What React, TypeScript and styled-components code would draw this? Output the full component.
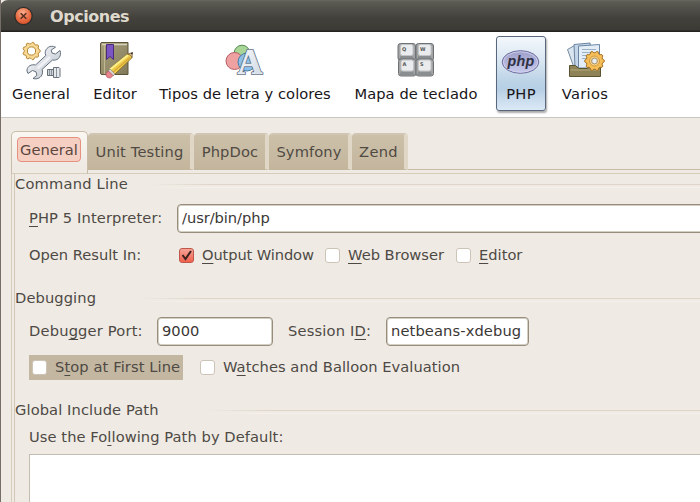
import React from "react";
import styled, { createGlobalStyle } from "styled-components";

const Global = createGlobalStyle`
  * { box-sizing: border-box; }
  html, body { margin: 0; padding: 0; overflow: hidden; background: #efebe4; }
  body { font-family: "DejaVu Sans", Verdana, sans-serif; font-size: 14.67px; line-height: 18px; color: #4e4944; }
`;

const Window = styled.div`
  width: 700px;
  height: 502px;
  display: flex;
  flex-direction: column;
  overflow: hidden;
  background: #efebe4;
  border-left: 1px solid #766e66;
  white-space: nowrap;
`;

const TitleBar = styled.header`
  height: 32px;
  flex: none;
  margin-left: -1px;
  padding-left: 14px;
  display: flex;
  align-items: center;
  gap: 16px;
  border-top-left-radius: 8px;
  background: linear-gradient(#696860 0, #5b5a53 2px, #42413b 18px, #3b3a35 30px, #242320 31px);
`;

const Title = styled.h1`
  margin: 0;
  font-size: 16px;
  line-height: 20px;
  font-weight: bold;
  color: #dfd9cd;
  letter-spacing: -0.45px;
  padding-top: 1px;
`;

const Toolbar = styled.nav`
  height: 86px;
  flex: none;
  display: flex;
  align-items: flex-start;
  padding-top: 4px;
  background: #fff;
  border-bottom: 1px solid #c9c5c0;
`;

const Tool = styled.button<{ $w: number; $active?: boolean; $ml?: number; $ls?: number }>`
  flex: none;
  width: ${(p) => p.$w}px;
  height: 75px;
  margin: 0 0 0 ${(p) => p.$ml ?? 0}px;
  padding: 4px 0 0;
  display: flex;
  flex-direction: column;
  align-items: center;
  gap: 4px;
  border: 1px solid ${(p) => (p.$active ? "#59677d" : "transparent")};
  border-radius: 3px;
  background: ${(p) =>
    p.$active ? "linear-gradient(#f3f7fb 0, #d7e5f1 35%, #bcd3e7 60%, #b7cfe4 72%, #dce9f6 100%)" : "none"};
  box-shadow: ${(p) => (p.$active ? "1px 2px 2px #aaa" : "none")};
  font: 14.67px/18px "DejaVu Sans", sans-serif;
  letter-spacing: ${(p) => p.$ls ?? 0}px;
  color: #191519;
  svg { flex: none; display: block; }
`;

const Tabs = styled.div`
  height: 56px;
  flex: none;
  padding: 13px 0 0 10px;
  display: flex;
  align-items: flex-end;
`;

const TabRule = styled.div`
  flex: 1;
  height: 5px;
  border-top: 1px solid #c7bba6;
  border-bottom: 1px solid #d6ccbc;
`;

const Tab = styled.button<{ $w: number; $ls?: number }>`
  width: ${(p) => p.$w}px;
  height: 41px;
  flex: none;
  margin: 0;
  padding: 0;
  display: flex;
  align-items: flex-start;
  border: 0;
  border-bottom: 1px solid #d6ccbc;
  background: none;
  font: inherit;
  color: #504a43;
  letter-spacing: ${(p) => p.$ls ?? 0}px;
  span {
    flex: 1;
    height: 37px;
    padding: 9px 0 0 1px;
    border-top: 2px solid #d1c6b4;
    border-right: 4px solid #e0d7c7;
    border-bottom: 1px solid #c2b59c;
    border-radius: 4px 4px 0 0;
    background: linear-gradient(#ccc0a9, #c4b69d);
    line-height: 16px;
  }
`;

const ActiveTab = styled.button`
  width: 77px;
  height: 43px;
  flex: none;
  padding: 5px 0 0 5px;
  margin: 0;
  display: flex;
  align-items: flex-start;
  border: 1px solid #c9bda9;
  border-bottom-color: #d6ccbc;
  border-radius: 5px 5px 0 0;
  background: linear-gradient(#faf7f2, #efebe4 80%);
  font: inherit;
  color: #5a463e;
  span {
    width: 64px;
    height: 25px;
    border: 1px solid #e69080;
    border-radius: 4px;
    background: #f6cfc3;
    line-height: 23px;
    text-align: center;
  }
`;

const Panel = styled.main`
  flex: 1;
  margin-left: 10px;
  padding-left: 2px;
  border-left: 1px solid #d6ccbc;
`;

const PanelInner = styled.div`
  height: 100%;
  border-left: 1px solid #d2c8b7;
`;

const Heading = styled.div<{ $mt: number; $gap: number; $ls?: number }>`
  height: 20px;
  margin-top: ${(p) => p.$mt}px;
  display: flex;
  align-items: center;
  gap: ${(p) => p.$gap}px;
  letter-spacing: ${(p) => p.$ls ?? 0}px;
  &::after {
    content: "";
    flex: 1;
    height: 2px;
    margin-top: 4px;
    border-top: 1px solid #dfd6c9;
    border-bottom: 1px solid #f5f1ea;
    mask-image: linear-gradient(90deg, transparent, #000 60px);
  }
`;

const Row = styled.div<{ $mt: number; $h: number }>`
  height: ${(p) => p.$h}px;
  margin-top: ${(p) => p.$mt}px;
  padding-left: 14px;
  display: flex;
  align-items: center;
`;

const Label = styled.span<{ $w?: number; $ls?: number; $ml?: number }>`
  flex: none;
  width: ${(p) => (p.$w ? `${p.$w}px` : "auto")};
  margin-left: ${(p) => p.$ml ?? 0}px;
  padding-bottom: 2px;
  letter-spacing: ${(p) => p.$ls ?? 0}px;
`;

const Key = styled.u`
  text-decoration: underline;
  text-decoration-thickness: 1px;
  text-underline-offset: 3px;
  text-decoration-skip-ink: none;
`;

const Field = styled.input<{ $w: number; $ls?: number }>`
  flex: none;
  width: ${(p) => p.$w}px;
  height: 29px;
  padding: 0 4px 2px;
  border: 1px solid #978d7d;
  box-shadow: inset 0 0 0 1px #d5cec2;
  border-radius: 4px;
  background: #fff;
  font: inherit;
  color: #3b3836;
  letter-spacing: ${(p) => p.$ls ?? 0}px;
  outline: 0;
`;

const Check = styled.label<{ $w: number; $ls?: number; $focus?: boolean; $ml?: number }>`
  flex: none;
  width: ${(p) => p.$w}px;
  height: 25px;
  margin-left: ${(p) => p.$ml ?? 0}px;
  display: flex;
  align-items: center;
  gap: 8px;
  padding-left: ${(p) => (p.$focus ? 3 : 0)}px;
  background: ${(p) => (p.$focus ? "#c4b7a1" : "none")};
  letter-spacing: ${(p) => p.$ls ?? 0}px;
  span { padding-bottom: 2px; }
`;

const Box = styled.i<{ $on?: boolean }>`
  flex: none;
  width: 15px;
  height: 15px;
  margin-bottom: 1px;
  border: 1px solid ${(p) => (p.$on ? "#c0584a" : "#cdc4b8")};
  border-radius: 3px;
  background: ${(p) => (p.$on ? "linear-gradient(#f8a396, #f0604e)" : "#fff")};
  svg { display: block; }
`;

const List = styled.div`
  height: 60px;
  margin: 7px 0 0 14px;
  border: 1px solid #c3bcb1;
  border-right: 0;
  background: #fff;
`;

const gear = (cx: number, cy: number, r: number, teeth: number) =>
  Array.from({ length: teeth * 4 }, (_, i) => {
    const a = ((i - 0.5) * Math.PI) / (teeth * 2);
    const d = i % 4 < 2 ? r : r * 0.84;
    return `${i ? "L" : "M"}${(cx + d * Math.cos(a)).toFixed(2)} ${(cy + d * Math.sin(a)).toFixed(2)}`;
  }).join("") + "Z";

const CloseIcon = () => (
  <svg width="20" height="20" viewBox="0 0 20 20">
    <defs>
      <radialGradient id="close" cx=".45" cy=".3" r=".7">
        <stop stopColor="#f9b08f" /><stop offset=".6" stopColor="#ea7048" /><stop offset="1" stopColor="#d9542c" />
      </radialGradient>
    </defs>
    <circle cx="9.5" cy="10" r="9.3" fill="#302f2b" />
    <circle cx="9.5" cy="10" r="8" fill="url(#close)" />
    <path d="M6.7 7.2l5.6 5.6m0-5.6l-5.6 5.6" stroke="#5c2e20" strokeWidth="1.6" />
  </svg>
);

const GeneralIcon = () => (
  <svg width="40" height="40" viewBox="0 0 40 40">
    <defs>
      <linearGradient id="steel" x2="1" y2="1"><stop stopColor="#fff" /><stop offset="1" stopColor="#b6bec9" /></linearGradient>
    </defs>
    <path d={gear(10.5, 10, 8.7, 9)} fill="#f8d994" stroke="#b58638" strokeLinejoin="round" />
    <circle cx="10.5" cy="10" r="4.1" fill="#fff" stroke="#b58638" />
    <path d="M34.5 6.2C29.5 3.5 24 7 24.200 12.500l.6 2L14.500 24c-4-1-8 1-8.500 5 0 1.500.3 2.500 1 3.500l4.500-3 3.500 1.300.8 3.500L12 37.500c5.500 1.500 10-2 9.500-7.500l-.5-1.500L31.500 19c4.500 1 8.500-2.500 8-7.500l-.5-2-4.500 3.500-3.500-1-.8-3z" fill="url(#steel)" stroke="#66717f" strokeLinejoin="round" />
    <path d="M16.5 27.500L29 16" stroke="#eef1f5" strokeWidth="2.5" />
    <path d="M26.5 28.500h6v6h-6z" fill="#cfd4d9" stroke="#68717a" />
    <path d="M32.5 26.500h5.500l1 1v8l-1 1h-5.500z" fill="#e5e9ec" stroke="#68717a" />
    <path d="M28.5 29v5m2-5v5M35.500 27v9" stroke="#8b949c" />
  </svg>
);

const EditorIcon = () => (
  <svg width="40" height="40" viewBox="0 0 40 40">
    <defs>
      <linearGradient id="book" x2="1" y2="1"><stop stopColor="#aaa17d" /><stop offset="1" stopColor="#817a59" /></linearGradient>
    </defs>
    <g transform="translate(1 0)">
      <path d="M6 1.5h26v32H6q-1.5 0-1.500-1.500V3Q4.500 1.500 6 1.500z" fill="url(#book)" stroke="#5d5539" />
      <path d="M6 3.500h25" stroke="#d6d3ba" strokeWidth="1.5" />
      <path d="M8.500 4v29" stroke="#c0b892" />
      <path d="M10.500 3.500h7v15l-3.500-3-3.500 3z" fill="#7b55c2" stroke="#4c2a7a" />
      <path d="M13 28.500L31.500 13q2.500-1 4 1.500l.5 2.200L18 34l-4-1z" fill="#edcd4b" stroke="#8a6921" strokeWidth=".9" />
      <path d="M14 28.500L32 14" stroke="#fff08a" strokeWidth="2" />
      <path d="M16 32L34 16.500" stroke="#d9a636" strokeWidth="1.3" />
      <path d="M31.500 13l5-1.500-.5 5q-1-3-4.500-3.500z" fill="#e5c59b" stroke="#765c35" strokeWidth=".7" />
      <path d="M34.500 12.200l2.400-1-.8 2.500z" fill="#222" />
      <path d="M14 28l5 5-2 2-5-5z" fill="#d5d7d5" stroke="#837d78" strokeWidth=".6" />
      <path d="M12.500 30l4.500 4.500-2.500 2.500q-5 0-4.500-4.500z" fill="#e8858d" stroke="#b75962" strokeWidth=".8" />
    </g>
  </svg>
);

const FontsIcon = () => (
  <svg width="40" height="40" viewBox="0 0 40 40">
    <defs>
      <linearGradient id="letter" x2="1" y2="1"><stop stopColor="#fff" /><stop offset="1" stopColor="#ccd6e2" /></linearGradient>
    </defs>
    <g transform="translate(-.5 1)">
      <circle cx="17.5" cy="11" r="7.8" fill="#a9d696" stroke="#548c55" />
      <circle cx="10" cy="19" r="8.5" fill="#efa0a0" stroke="#b45e65" />
      <circle cx="22.500" cy="20" r="9" fill="#8cc0ea" stroke="#477ba2" />
      <text x="13" y="31.500" textLength="25" lengthAdjust="spacingAndGlyphs" fontFamily="Liberation Serif" fontWeight="bold" fontSize="36" fill="none" stroke="#526275" strokeWidth="2.2" strokeLinejoin="round">A</text>
      <text x="13" y="31.500" textLength="25" lengthAdjust="spacingAndGlyphs" fontFamily="Liberation Serif" fontWeight="bold" fontSize="36" fill="url(#letter)" stroke="#edf1f6" strokeWidth=".6">A</text>
    </g>
  </svg>
);

const keys = [["Q", 1.5, 2], ["W", 19.5, 2], ["A", 2, 17.5], ["S", 19.5, 17.5]] as const;
const KeysIcon = () => (
  <svg width="40" height="40" viewBox="0 0 40 40">
    {keys.map(([k, x, y]) => (
      <g key={k} transform={`translate(${x} ${y})`}>
        <rect x=".5" y=".5" width="17.5" height="17" rx="2.5" fill="#a2a4a6" stroke="#6f7275" />
        <path d="M3 13l-2 4h16l-2-4z" fill="#8b8e91" />
        <rect x="3" y="1.500" width="12.500" height="11" rx="2" fill="#e9ebec" stroke="#c2c5c7" />
        <text x="4.500" y="7.500" fontFamily="DejaVu Sans" fontSize="5" fontWeight="bold" fill="#555">{k}</text>
      </g>
    ))}
  </svg>
);

const PhpIcon = () => (
  <svg width="40" height="40" viewBox="0 0 40 40">
    <defs>
      <linearGradient id="php" x2="0" y2="1"><stop stopColor="#9d9fc9" /><stop offset="1" stopColor="#c6c8ec" /></linearGradient>
    </defs>
    <ellipse cx="19.500" cy="21" rx="18.300" ry="11.300" fill="url(#php)" stroke="#6a6a9a" />
    <ellipse cx="19.500" cy="21" rx="17.200" ry="10.200" fill="none" stroke="#d5d5f0" strokeWidth=".8" />
    <text x="20" y="24.500" textAnchor="middle" textLength="27" lengthAdjust="spacingAndGlyphs" fontFamily="Liberation Sans" fontSize="15" fontWeight="bold" fontStyle="italic" fill="#303044">php</text>
  </svg>
);

const MiscIcon = () => (
  <svg width="40" height="40" viewBox="0 0 40 40">
    <path d="M2.500 8.500l7-4 4 22H9z" fill="#d9e5ef" stroke="#7489a0" />
    <path d="M9 3.500l16-1.500L28 26H10z" fill="#c4d6e8" stroke="#6b86a3" />
    <path d="M13.500 5l21-1.500V27h-21z" fill="#e2edf7" stroke="#6b86a3" />
    <path d="M17 8.500h14M17 11.500h12M17 14.500h10M17 17.500h9" stroke="#9db1c4" />
    <path d="M4.500 24.500h6l3 3h9l2-3h11v11h-31z" fill="#8e8357" stroke="#5b5230" />
    <path d="M5.500 29h29" stroke="#b3aa7d" />
    <path d={gear(29.5, 20, 9.8, 10)} fill="#f6bf58" stroke="#a56f24" strokeLinejoin="round" />
    <circle cx="29.500" cy="20" r="5" fill="#f8d486" stroke="#d09740" />
    <circle cx="29.500" cy="20" r="2.900" fill="#e8edf2" stroke="#8f7950" strokeWidth=".8" />
  </svg>
);

const Tick = () => (
  <svg width="13" height="13" viewBox="0 0 13 13">
    <path d="M2.500 6L5.500 10L11 2" fill="none" stroke="#3a211e" strokeWidth="2" />
  </svg>
);

export default function App() {
  return (
    <>
      <Global />
      <Window>
        <TitleBar><CloseIcon /><Title>Opciones</Title></TitleBar>
        <Toolbar>
          <Tool $w={60} $ml={10}><GeneralIcon />General</Tool>
          <Tool $w={60} $ml={14}><EditorIcon />Editor</Tool>
          <Tool $w={180} $ml={10} $ls={0.05}><FontsIcon />Tipos de letra y colores</Tool>
          <Tool $w={130} $ml={16} $ls={0.1}><KeysIcon />Mapa de teclado</Tool>
          <Tool $w={50} $ml={15} $ls={0.3} $active><PhpIcon />PHP</Tool>
          <Tool $w={60} $ml={9} $ls={0.3}><MiscIcon />Varios</Tool>
        </Toolbar>
        <Tabs>
          <ActiveTab><span>General</span></ActiveTab>
          <Tab $w={106} $ls={0.15}><span>Unit Testing</span></Tab>
          <Tab $w={75} $ls={0.15}><span>PhpDoc</span></Tab>
          <Tab $w={83} $ls={0.1}><span>Symfony</span></Tab>
          <Tab $w={56} $ls={0.3}><span>Zend</span></Tab>
          <TabRule />
        </Tabs>
        <Panel><PanelInner>
          <Heading $mt={0} $gap={20} $ls={0.2}>Command Line</Heading>
          <Row $mt={10} $h={29}>
            <Label $w={148} $ls={0.12}><Key>P</Key>HP 5 Interpreter:</Label>
            <Field $w={540} $ls={-0.05} defaultValue="/usr/bin/php" />
          </Row>
          <Row $mt={10} $h={25}>
            <Label $w={150}>Open Result In:</Label>
            <Check $w={146} $ls={-0.12}><Box $on><Tick /></Box><span><Key>O</Key>utput Window</span></Check>
            <Check $w={131}><Box /><span><Key>W</Key>eb Browser</span></Check>
            <Check $w={80}><Box /><span><Key>E</Key>ditor</span></Check>
          </Row>
          <Heading $mt={20} $gap={42} $ls={0.1}>Debugging</Heading>
          <Row $mt={9} $h={29}>
            <Label $w={128} $ls={0.18}>Debu<Key>g</Key>ger Port:</Label>
            <Field $w={116} defaultValue="9000" />
            <Label $w={98} $ml={15} $ls={0.18}>Session I<Key>D</Key>:</Label>
            <Field $w={143} $ls={0.12} defaultValue="netbeans-xdebug" />
          </Row>
          <Row $mt={9} $h={25}>
            <Check $w={154} $ls={0.1} $focus><Box /><span>S<Key>t</Key>op at First Line</span></Check>
            <Check $w={280} $ls={0.05} $ml={17}><Box /><span>W<Key>a</Key>tches and Balloon Evaluation</span></Check>
          </Row>
          <Heading $mt={20} $gap={48} $ls={0.1}>Global Include Path</Heading>
          <Row $mt={9} $h={18}><Label $ls={0.07}>Use the Fo<Key>l</Key>lowing Path by Default:</Label></Row>
          <List />
        </PanelInner></Panel>
      </Window>
    </>
  );
}
